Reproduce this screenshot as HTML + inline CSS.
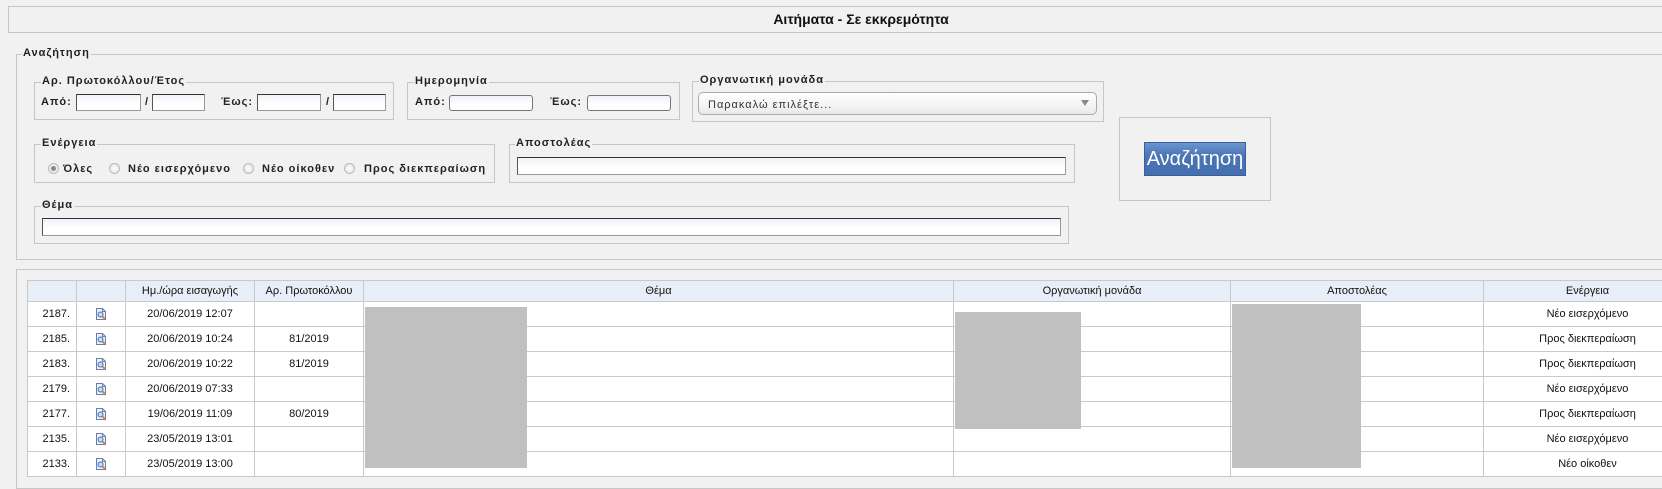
<!DOCTYPE html>
<html><head><meta charset="utf-8"><style>
body{margin:0;width:1662px;height:468px;overflow:hidden;background:#f1f1f1;font-family:"Liberation Sans",Arial,sans-serif;position:relative}
.a{position:absolute;box-sizing:border-box}
.box{position:absolute;box-sizing:border-box;border:1px solid #c6c6c6}
.lg{position:absolute;background:#f1f1f1;font-size:11px;font-weight:bold;letter-spacing:1px;color:#222;padding:0 1px;line-height:13px}
.lbl{position:absolute;font-size:11px;font-weight:bold;letter-spacing:1px;color:#222;line-height:13px}
.inp{position:absolute;box-sizing:border-box;border:1px solid #666;border-color:#333 #999 #999 #555;background:linear-gradient(#eef2f8,#fff 60%);}
.rad{position:absolute;width:11px;height:11px;border-radius:50%;border:1px solid #bbb;background:radial-gradient(#fff,#ddd);box-sizing:border-box}
table{position:absolute;left:27px;top:280px;border-collapse:collapse;font-size:11px;color:#111;table-layout:fixed;width:1664px}
td,th{border:1px solid #c9c9c9;height:24px;padding:0 4px;text-align:center;white-space:nowrap;overflow:hidden;background:#fff;font-weight:normal}
th{background:#e8eef7;height:20px}
td.n{text-align:right;padding-right:6px}
.gr{position:absolute;background:#c0c0c0}
</style></head><body>
<div class="box" style="left:8px;top:6px;width:1680px;height:27px"></div>
<div class="a" style="left:0;top:11px;width:1722px;text-align:center;font-size:14px;font-weight:bold;color:#111">Αιτήματα - Σε εκκρεμότητα</div>

<div class="box" style="left:16px;top:54px;width:1680px;height:206px"></div>
<div class="lg" style="left:22px;top:47px">Αναζήτηση</div>

<div class="box" style="left:34px;top:82px;width:360px;height:38px"></div>
<div class="lg" style="left:41px;top:75px">Αρ. Πρωτοκόλλου/Έτος</div>
<div class="lbl" style="left:41px;top:96px">Από:</div>
<div class="inp" style="left:76px;top:94px;width:65px;height:17px"></div>
<div class="lbl" style="left:145px;top:96px">/</div>
<div class="inp" style="left:152px;top:94px;width:53px;height:17px"></div>
<div class="lbl" style="left:221px;top:96px">Έως:</div>
<div class="inp" style="left:257px;top:94px;width:64px;height:17px"></div>
<div class="lbl" style="left:326px;top:96px">/</div>
<div class="inp" style="left:333px;top:94px;width:53px;height:17px"></div>

<div class="box" style="left:407px;top:82px;width:273px;height:38px"></div>
<div class="lg" style="left:414px;top:75px">Ημερομηνία</div>
<div class="lbl" style="left:415px;top:96px">Από:</div>
<div class="inp" style="left:449px;top:95px;width:84px;height:16px;border-radius:3px;border-color:#777"></div>
<div class="lbl" style="left:550px;top:96px">Έως:</div>
<div class="inp" style="left:587px;top:95px;width:84px;height:16px;border-radius:3px;border-color:#777"></div>

<div class="box" style="left:692px;top:81px;width:412px;height:41px"></div>
<div class="lg" style="left:699px;top:74px">Οργανωτική μονάδα</div>
<div class="a" style="left:698px;top:92px;width:399px;height:23px;border:1px solid #aaa;border-radius:5px;background:linear-gradient(#fff,#f4f4f4 60%,#e9e9e9);font-size:11px;letter-spacing:1px;color:#333;padding:6px 0 0 9px">Παρακαλώ επιλέξτε...</div>
<div class="a" style="left:1081px;top:100px;width:0;height:0;border-left:4px solid transparent;border-right:4px solid transparent;border-top:6px solid #888"></div>

<div class="box" style="left:1119px;top:117px;width:152px;height:84px"></div>
<div class="a" style="left:1144px;top:142px;width:102px;height:34px;background:linear-gradient(#6a95d0,#4a74b5 40%,#4570b0);border:1px solid #3a5f9a;color:#fff;font-size:20px;text-align:center;line-height:32px">Αναζήτηση</div>

<div class="box" style="left:34px;top:144px;width:461px;height:39px"></div>
<div class="lg" style="left:41px;top:137px">Ενέργεια</div>
<div class="rad" style="left:48px;top:163px"><div style="width:5px;height:5px;border-radius:50%;background:#888;margin:2px"></div></div>
<div class="lbl" style="left:63px;top:163px">Όλες</div>
<div class="rad" style="left:109px;top:163px"></div>
<div class="lbl" style="left:128px;top:163px">Νέο εισερχόμενο</div>
<div class="rad" style="left:243px;top:163px"></div>
<div class="lbl" style="left:262px;top:163px">Νέο οίκοθεν</div>
<div class="rad" style="left:344px;top:163px"></div>
<div class="lbl" style="left:364px;top:163px">Προς διεκπεραίωση</div>

<div class="box" style="left:509px;top:144px;width:566px;height:39px"></div>
<div class="lg" style="left:515px;top:137px">Αποστολέας</div>
<div class="inp" style="left:517px;top:157px;width:549px;height:18px"></div>

<div class="box" style="left:34px;top:206px;width:1035px;height:38px"></div>
<div class="lg" style="left:41px;top:199px">Θέμα</div>
<div class="inp" style="left:42px;top:218px;width:1019px;height:18px"></div>

<div class="box" style="left:16px;top:269px;width:1680px;height:220px"></div>

<table>
<colgroup><col style="width:49px"><col style="width:49px"><col style="width:129px"><col style="width:109px"><col style="width:590px"><col style="width:277px"><col style="width:253px"><col style="width:208px"></colgroup>
<tr><th></th><th></th><th>Ημ./ώρα εισαγωγής</th><th>Αρ. Πρωτοκόλλου</th><th>Θέμα</th><th>Οργανωτική μονάδα</th><th>Αποστολέας</th><th>Ενέργεια</th></tr>
<tr><td class="n">2187.</td><td>ICON</td><td>20/06/2019 12:07</td><td></td><td></td><td></td><td></td><td>Νέο εισερχόμενο</td></tr>
<tr><td class="n">2185.</td><td>ICON</td><td>20/06/2019 10:24</td><td>81/2019</td><td></td><td></td><td></td><td>Προς διεκπεραίωση</td></tr>
<tr><td class="n">2183.</td><td>ICON</td><td>20/06/2019 10:22</td><td>81/2019</td><td></td><td></td><td></td><td>Προς διεκπεραίωση</td></tr>
<tr><td class="n">2179.</td><td>ICON</td><td>20/06/2019 07:33</td><td></td><td></td><td></td><td></td><td>Νέο εισερχόμενο</td></tr>
<tr><td class="n">2177.</td><td>ICON</td><td>19/06/2019 11:09</td><td>80/2019</td><td></td><td></td><td></td><td>Προς διεκπεραίωση</td></tr>
<tr><td class="n">2135.</td><td>ICON</td><td>23/05/2019 13:01</td><td></td><td></td><td></td><td></td><td>Νέο εισερχόμενο</td></tr>
<tr><td class="n">2133.</td><td>ICON</td><td>23/05/2019 13:00</td><td></td><td></td><td></td><td></td><td>Νέο οίκοθεν</td></tr>
</table>
<script>
document.querySelectorAll('td').forEach(function(t){if(t.textContent==='ICON'){t.innerHTML='<svg width="14" height="14" viewBox="0 0 14 14" style="vertical-align:middle"><path d="M2.5 1.5h6l3 3v8h-9z" fill="#eef2f8" stroke="#6d7fa8"/><path d="M8.5 1.5v3h3" fill="none" stroke="#6d7fa8"/><circle cx="6.5" cy="7.5" r="2.5" fill="#bfe0f5" stroke="#3d6eb0"/><path d="M8.3 9.3l2.5 2.5" stroke="#d9823b" stroke-width="2"/></svg>';}});
</script>
<div class="gr" style="left:365px;top:307px;width:162px;height:161px"></div>
<div class="gr" style="left:955px;top:312px;width:126px;height:117px"></div>
<div class="gr" style="left:1232px;top:304px;width:129px;height:164px"></div>
</body></html>
